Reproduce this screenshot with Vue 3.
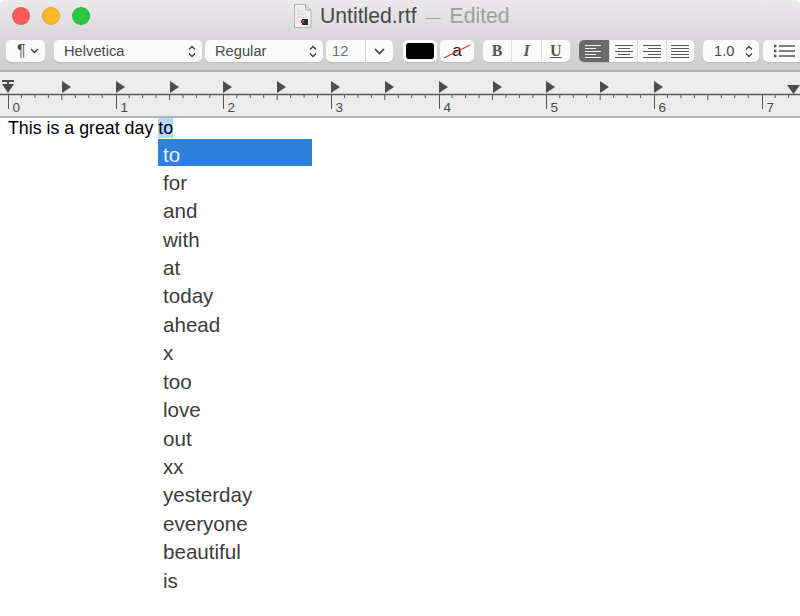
<script setup>
const words = ['to', 'for', 'and', 'with', 'at', 'today', 'ahead', 'x', 'too', 'love', 'out', 'xx', 'yesterday', 'everyone', 'beautiful', 'is']

const inch = 107.67
const minorTicks = []
for (let i = 0; i <= 59; i++) {
  if (i % 8 !== 0) minorTicks.push({ x: 8 + (i * inch) / 8, tall: i % 4 === 0 })
}
const majorTicks = []
for (let i = 0; i <= 7; i++) majorTicks.push({ x: Math.round(8 + i * inch), label: i })
const tabStops = []
for (let i = 1; i <= 12; i++) tabStops.push(Math.round(8 + (i * inch) / 2))
</script>

<template>
  <div class="window">
    <header class="chrome">
      <div class="titlebar">
        <div class="lights">
          <span class="light red"></span>
          <span class="light yellow"></span>
          <span class="light green"></span>
        </div>
        <div class="title">
          <svg class="doc" width="19" height="24" viewBox="0 0 19 24">
            <path d="M1.5 .5H12.5L18 6V23.5H1.5Z" fill="#f1f0f0" stroke="#b5b5b5" />
            <path d="M12.5 .5V6H18" fill="#dcdcdc" stroke="#b5b5b5" />
            <path d="M4 4h2M4 7h6M4 10h10M4 13h10" stroke="#d2d2d2" />
            <rect x="9" y="15" width="6" height="6" fill="#2c2c2c" />
            <rect x="8" y="16" width="3" height="3" fill="#c0392b" />
          </svg>
          <span class="name">Untitled.rtf</span>
          <span class="dash">—</span>
          <span class="edited">Edited</span>
        </div>
      </div>

      <div class="toolbar">
        <div class="ctl para">
          <span class="pilcrow">¶</span>
          <svg width="9" height="6" viewBox="0 0 9 6"><path class="chev" d="M1 1l3.5 3.5L8 1" /></svg>
        </div>
        <div class="ctl font">
          <span>Helvetica</span>
          <svg width="8" height="13" viewBox="0 0 8 13"><path class="chev" d="M1 4.5L4 1.5l3 3M1 8.5l3 3 3-3" /></svg>
        </div>
        <div class="ctl weight">
          <span>Regular</span>
          <svg width="8" height="13" viewBox="0 0 8 13"><path class="chev" d="M1 4.5L4 1.5l3 3M1 8.5l3 3 3-3" /></svg>
        </div>
        <div class="ctl size">
          <span class="size-val">12</span>
          <span class="size-drop">
            <svg width="11" height="7" viewBox="0 0 11 7"><path class="chev wide" d="M1 1l4.5 4.5L10 1" /></svg>
          </span>
        </div>

        <div class="swatch first"><span class="well"></span></div>
        <div class="swatch second">
          <span class="well-a">a</span>
          <svg class="strike" width="28" height="15" viewBox="0 0 28 15"><path d="M1 14L27 1" stroke="#f0302a" stroke-width="1.2" /></svg>
        </div>

        <div class="ctl seg biu">
          <span class="b">B</span>
          <span class="i">I</span>
          <span class="u">U</span>
        </div>

        <div class="ctl seg align">
          <span class="on">
            <svg width="20" height="15" viewBox="0 0 20 15"><path d="M1 1.5h16M1 4.5h11M1 7.5h16M1 10.5h11M1 13.5h16" /></svg>
          </span>
          <span>
            <svg width="20" height="15" viewBox="0 0 20 15"><path d="M1 1.5h18M4 4.5h12M1 7.5h18M4 10.5h12M1 13.5h18" /></svg>
          </span>
          <span>
            <svg width="20" height="15" viewBox="0 0 20 15"><path d="M1 1.5h18M6 4.5h13M1 7.5h18M6 10.5h13M1 13.5h18" /></svg>
          </span>
          <span>
            <svg width="20" height="15" viewBox="0 0 20 15"><path d="M1 1.5h18M1 4.5h18M1 7.5h18M1 10.5h18M1 13.5h18" /></svg>
          </span>
        </div>

        <div class="ctl spacing">
          <span>1.0</span>
          <svg width="8" height="13" viewBox="0 0 8 13"><path class="chev" d="M1 4.5L4 1.5l3 3M1 8.5l3 3 3-3" /></svg>
        </div>
        <div class="ctl list">
          <svg width="22" height="14" viewBox="0 0 22 14">
            <path class="list-lines" d="M6 2h16M6 7h16M6 12h16" />
            <path class="list-dots" d="M1 2h2.4M1 7h2.4M1 12h2.4" />
          </svg>
        </div>
      </div>
    </header>

    <div class="ruler">
      <svg width="800" height="44" viewBox="0 0 800 44">
        <path d="M0 22.5H800" stroke="#5a5a5a" stroke-width="1.4" />
        <line v-for="t in minorTicks" :key="t.x" :x1="t.x" :x2="t.x" y1="23" :y2="t.tall ? 28 : 26" stroke="#555" />
        <line v-for="t in majorTicks" :key="t.label" :x1="t.x + 0.5" :x2="t.x + 0.5" y1="22" y2="37" stroke="#555" />
        <text v-for="t in majorTicks" :key="'n' + t.label" :x="t.x + 4.5" y="40" class="ruler-num">{{ t.label }}</text>
        <path v-for="x in tabStops" :key="x" :d="`M${x} 9L${x + 9} 15L${x} 21Z`" fill="#4d4d4d" />
        <path d="M2 8H14V10H9V12H14L8 21L2 12H7V10H2Z" fill="#4d4d4d" />
        <path d="M787 13H800L793.5 22Z" fill="#4d4d4d" />
      </svg>
    </div>

    <main class="page">
      <p class="line">This is a great day <span class="sel">to</span></p>
      <ul class="menu">
        <li v-for="(w, i) in words" :key="w" :class="{ active: i === 0 }">{{ w }}</li>
      </ul>
    </main>
  </div>
</template>

<style>
html, body {
  margin: 0;
  background: #fff;
}
</style>

<style scoped>
.window {
  width: 800px;
  height: 616px;
  overflow: hidden;
  display: flex;
  flex-direction: column;
  font-family: "Liberation Sans", Arial, sans-serif;
  background: #fff;
  border-radius: 6px 6px 0 0;
}

.chrome {
  height: 70px;
  flex: none;
  background: linear-gradient(180deg, #ebe9eb 0%, #dcdadc 45%, #cfcdcf 100%);
  border-bottom: 2px solid #b4b4b4;
}

.titlebar {
  height: 32px;
  display: flex;
  align-items: center;
  position: relative;
}

.lights {
  display: flex;
  gap: 12px;
  padding-left: 12px;
}

.light {
  width: 18px;
  height: 18px;
  border-radius: 50%;
  box-sizing: border-box;
  border: 1px solid rgba(0, 0, 0, 0.1);
}
.red { background: #fc5b57; }
.yellow { background: #fdb82c; }
.green { background: #2ac840; }

.title {
  position: absolute;
  left: 293px;
  top: 4px;
  display: flex;
  align-items: center;
  font-size: 21.2px;
  white-space: nowrap;
}
.doc { margin-right: 8px; }
.name { color: #4a4a4a; margin-right: 9px; }
.dash { color: #a0a0a0; font-size: 15px; margin-right: 9px; }
.edited { color: #a0a0a0; }

.toolbar {
  display: flex;
  align-items: center;
  padding: 8px 0 0 6px;
}

.ctl {
  height: 22px;
  flex: none;
  box-sizing: border-box;
  background: #fbfbfb;
  border-radius: 5px;
  box-shadow: 0 1px 0 #bdbbbd;
  display: flex;
  align-items: center;
  font-size: 14.7px;
  color: #4a4a4a;
}

.chev {
  fill: none;
  stroke: #404040;
  stroke-width: 1.4;
}
.chev.wide { stroke-width: 1.7; }

.para {
  width: 39px;
  margin-right: 9px;
  padding: 0 6px 0 11px;
  justify-content: space-between;
}
.pilcrow { font-size: 16px; }

.font {
  width: 148px;
  margin-right: 3px;
  padding: 0 6px 0 10px;
  justify-content: space-between;
}

.weight {
  width: 118px;
  margin-right: 3px;
  padding: 0 6px 0 10px;
  justify-content: space-between;
}

.size {
  width: 67px;
  margin-right: 10px;
}
.size-val {
  width: 39px;
  padding-left: 6px;
  box-sizing: border-box;
  color: #6d6d6d;
}
.size-drop {
  flex: 1;
  height: 100%;
  border-left: 1px solid #d5d5d5;
  display: flex;
  align-items: center;
  justify-content: center;
}

.swatch {
  width: 34px;
  height: 22px;
  flex: none;
  box-sizing: border-box;
  background: #fbfbfb;
  border-radius: 5px;
  box-shadow: 0 1px 0 #bdbbbd;
  padding: 3px;
  position: relative;
}
.swatch.first { margin-right: 3px; }
.swatch.second { margin-right: 9px; }
.well {
  display: block;
  height: 100%;
  background: #000;
  border-radius: 3px;
}
.well-a {
  display: block;
  text-align: center;
  font-size: 17px;
  line-height: 15px;
  color: #111;
}
.strike {
  position: absolute;
  left: 3px;
  top: 4px;
}

.seg > span {
  flex: 1;
  height: 100%;
  display: flex;
  align-items: center;
  justify-content: center;
  border-left: 1px solid #dedede;
}
.seg > span:first-child { border-left: 0; }

.biu {
  width: 87px;
  margin-right: 9px;
  font-family: "Liberation Serif", serif;
  font-size: 16px;
  color: #555;
}
.b { font-weight: bold; }
.i { font-style: italic; font-weight: bold; }
.u { text-decoration: underline; font-weight: bold; }

.align {
  width: 115px;
  margin-right: 9px;
  overflow: hidden;
}
.align svg path {
  stroke: #5a5a5a;
  fill: none;
}
.align .on {
  background: #6a6a6a;
  flex: none;
  width: 30px;
}
.align .on svg path { stroke: #f2f2f2; }

.spacing {
  width: 56px;
  margin-right: 4px;
  padding: 0 6px 0 11px;
  justify-content: space-between;
}

.list {
  width: 60px;
  padding-left: 10px;
}
.list-lines {
  stroke: #555;
  stroke-width: 1.6;
  fill: none;
}
.list-dots {
  stroke: #555;
  stroke-width: 2.4;
  fill: none;
}

.ruler {
  height: 44px;
  flex: none;
  background: #ececec;
  border-bottom: 2px solid #b4b4b4;
}
.ruler svg { display: block; }
.ruler-num {
  font-size: 13.5px;
  fill: #4a4a4a;
  font-family: "Liberation Sans", Arial, sans-serif;
}

.page {
  flex: 1;
  position: relative;
  background: #fff;
}

.line {
  margin: 0;
  padding-left: 8px;
  font-size: 17.8px;
  line-height: 21px;
  color: #000;
  white-space: nowrap;
}
.sel { background: #b3d7ff; }

.menu {
  position: absolute;
  left: 158px;
  top: 21px;
  width: 154px;
  margin: 0;
  padding: 0;
  list-style: none;
  font-size: 20.6px;
  color: #3c3c3c;
}
.menu li {
  height: 28.43px;
  line-height: 28.43px;
  padding-left: 5px;
}
.menu li.active {
  height: 27px;
  margin-bottom: 2.8px;
  line-height: 31px;
  background: #2f7fdc;
  color: #e8f1fb;
}
</style>
